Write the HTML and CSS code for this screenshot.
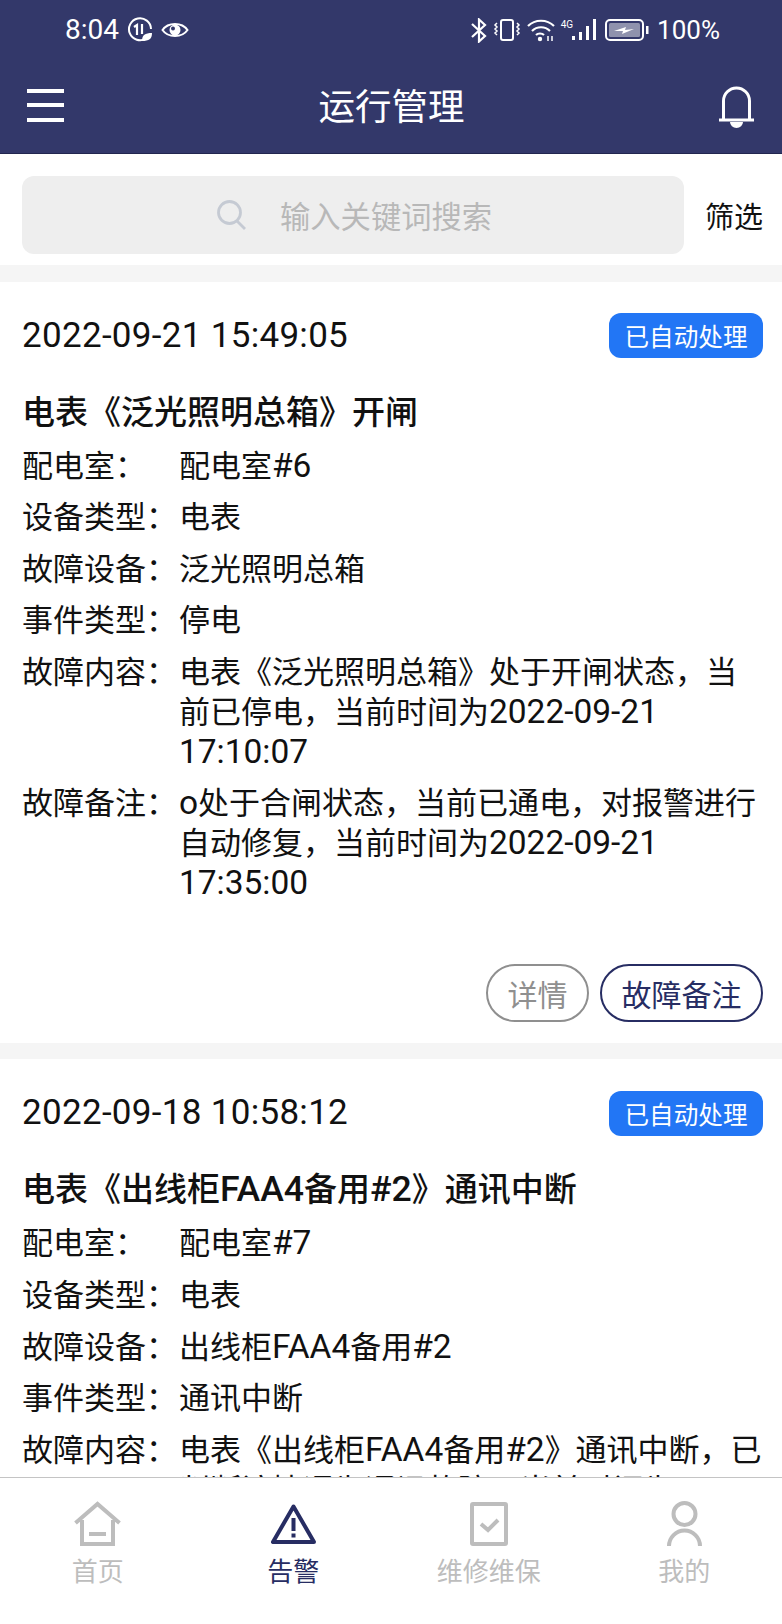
FILE: index.html
```html
<!DOCTYPE html>
<html lang="zh-CN">
<head>
    <meta charset="UTF-8">
    <meta name="viewport" content="width=device-width, initial-scale=1.0">
    <title>运行管理</title>
    <link rel="stylesheet" href="styles.css">
</head>
<body>
    <div class="app">
        <header class="header">
            <div class="status-bar">
                <div class="status-left">
                    <span class="time">8:04</span>
                    <svg width="26" height="26" viewBox="0 0 26 26" fill="none" stroke="#fff" stroke-width="2">
                        <path d="M19 21.500A11 11 0 1 1 24 12"/>
                        <path d="M7 10l3-2v10M15 7v10" stroke-width="2.200"/>
                        <path d="M15 24c0-6 3-8 10-8 0 6-3 8-10 8z" fill="#fff" stroke="none"/>
                    </svg>
                    <svg width="28" height="16" viewBox="0 0 28 16" fill="none" stroke="#fff" stroke-width="2">
                        <path d="M1.500 8C7 0 21 0 26.500 8C21 16 7 16 1.500 8z"/>
                        <circle cx="14" cy="8" r="5.500" fill="#fff" stroke="none"/>
                        <circle cx="12" cy="6.500" r="2" fill="#33386a" stroke="none"/>
                    </svg>
                </div>
                <div class="status-right">
                    <svg width="17" height="25" viewBox="0 0 17 25" fill="none" stroke="#fff" stroke-width="2.200">
                        <path d="M2 6l13 12-6 5.500V1.500L15 7 2 19"/>
                    </svg>
                    <svg width="28" height="24" viewBox="0 0 28 24" fill="none" stroke="#fff" stroke-width="2">
                        <rect x="8" y="2" width="12" height="20" rx="2"/>
                        <path d="M4 5l-2 2 2 2-2 2 2 2-2 2 2 2M24 5l2 2-2 2 2 2-2 2 2 2-2 2" stroke-width="1.500"/>
                    </svg>
                    <svg width="28" height="24" viewBox="0 0 28 24" fill="none" stroke="#fff" stroke-width="2.200">
                        <path d="M1 8c7-7 19-7 26 0M5 13c5-5 13-5 18 0M9 17c2-2 6-2 8 0"/>
                        <circle cx="13" cy="21" r="2.200" fill="#fff" stroke="none"/>
                        <path d="M21 18v5M25 18v5" stroke-width="1.500"/>
                    </svg>
                    <div class="signal">
                        <span class="signal-label">4G</span>
                        <svg width="26" height="22" viewBox="0 0 26 22" fill="#fff">
                            <rect x="1" y="17" width="3" height="4"/>
                            <rect x="8" y="13" width="3" height="8"/>
                            <rect x="15" y="7" width="3" height="14"/>
                            <rect x="22" y="0" width="3" height="21"/>
                        </svg>
                    </div>
                    <svg class="battery-icon" width="44" height="24" viewBox="0 0 44 24" fill="none">
                        <rect x="1" y="2" width="37" height="20" rx="4" stroke="#fff" stroke-width="2"/>
                        <rect x="4" y="5" width="31" height="14" rx="1.500" fill="#8f92ad"/>
                        <path d="M9 13l12-4-1 3 9-1-12 5 1-3z" fill="#fff"/>
                        <rect x="41" y="8" width="2.500" height="8" fill="#fff"/>
                    </svg>
                    <span class="battery">100%</span>
                </div>
            </div>
            <div class="toolbar">
                <svg width="37" height="33" viewBox="0 0 37 33" fill="#fff">
                    <rect x="0" y="0" width="37" height="4"/>
                    <rect x="0" y="14" width="37" height="4"/>
                    <rect x="0" y="29" width="37" height="4"/>
                </svg>
                <h1 class="page-title">运行管理</h1>
                <svg class="bell" width="35" height="42" viewBox="0 0 35 42" fill="none" stroke="#fff" stroke-width="3">
                    <path d="M4.500 33V15a13 13 0 0 1 26 0v18"/>
                    <path d="M0 34h35"/>
                    <path d="M11 36h13a6.500 6 0 0 1-13 0z" fill="#fff" stroke="none"/>
                </svg>
            </div>
        </header>

        <main class="content">
            <div class="search-row">
                <div class="search-box">
                    <svg width="30" height="30" viewBox="0 0 30 30" fill="none" stroke="#c5cad3" stroke-width="2.800">
                        <circle cx="12.500" cy="12.500" r="11"/>
                        <path d="M20 21l8 8"/>
                    </svg>
                    <span class="search-text">输入关键词搜索</span>
                </div>
                <span class="filter">筛选</span>
            </div>

            <section class="card">
                <div class="card-top">
                    <span class="card-date">2022-09-21 15:49:05</span>
                    <span class="badge">已自动处理</span>
                </div>
                <h2 class="card-title">电表《泛光照明总箱》开闸</h2>
                <dl class="info">
                    <dt>配电室&#65306;</dt><dd>配电室<span class="num">#6</span></dd>
                    <dt>设备类型&#65306;</dt><dd>电表</dd>
                    <dt>故障设备&#65306;</dt><dd>泛光照明总箱</dd>
                    <dt>事件类型&#65306;</dt><dd>停电</dd>
                    <dt>故障内容&#65306;</dt><dd>电表《泛光照明总箱》处于开闸状态&#65292;当前已停电&#65292;当前时间为<span class="num">2022-09-21</span> <span class="num">17:10:07</span></dd>
                    <dt>故障备注&#65306;</dt><dd><span class="num">o</span>处于合闸状态&#65292;当前已通电&#65292;对报警进行自动修复&#65292;当前时间为<span class="num">2022-09-21</span> <span class="num">17:35:00</span></dd>
                </dl>
                <div class="card-actions">
                    <span class="btn btn-grey">详情</span>
                    <span class="btn btn-navy">故障备注</span>
                </div>
            </section>

            <section class="card">
                <div class="card-top">
                    <span class="card-date">2022-09-18 10:58:12</span>
                    <span class="badge">已自动处理</span>
                </div>
                <h2 class="card-title">电表《出线柜<span class="num">FAA4</span>备用<span class="num">#2</span>》通讯中断</h2>
                <dl class="info">
                    <dt>配电室&#65306;</dt><dd>配电室<span class="num">#7</span></dd>
                    <dt>设备类型&#65306;</dt><dd>电表</dd>
                    <dt>故障设备&#65306;</dt><dd>出线柜<span class="num">FAA4</span>备用<span class="num">#2</span></dd>
                    <dt>事件类型&#65306;</dt><dd>通讯中断</dd>
                    <dt>故障内容&#65306;</dt><dd>电表《出线柜<span class="num">FAA4</span>备用<span class="num">#2</span>》通讯中断&#65292;已判断该情况为通讯故障&#65292;当前时间为<span class="num">2022-09-18</span></dd>
                </dl>
            </section>
        </main>

        <nav class="tabbar">
            <div class="tab">
                <svg width="47" height="46" viewBox="0 0 47 46" fill="none" stroke="#bdbdbd" stroke-width="4">
                    <path d="M1.500 22L23.500 3l22 19"/>
                    <path d="M8 19v24h31V19"/>
                    <path d="M15 33h17"/>
                </svg>
                <span>首页</span>
            </div>
            <div class="tab tab-active">
                <svg width="45" height="46" viewBox="0 0 45 46" fill="none">
                    <path d="M22.500 5.500L2 41h41z" stroke="#272d63" stroke-width="4" stroke-linejoin="round"/>
                    <rect x="20.500" y="17" width="4" height="13" fill="#272d63"/>
                    <rect x="20.500" y="32.500" width="4" height="4" fill="#272d63"/>
                </svg>
                <span>告警</span>
            </div>
            <div class="tab">
                <svg width="38" height="46" viewBox="0 0 38 46" fill="none" stroke="#bdbdbd" stroke-width="4">
                    <rect x="2" y="3" width="34" height="40" rx="1"/>
                    <path d="M11 23l7 6 10-10"/>
                </svg>
                <span>维修维保</span>
            </div>
            <div class="tab">
                <svg width="35" height="46" viewBox="0 0 35 46" fill="none" stroke="#bdbdbd" stroke-width="4">
                    <circle cx="17.500" cy="13" r="11"/>
                    <path d="M2 45a15.500 15.500 0 0 1 31 0"/>
                </svg>
                <span>我的</span>
            </div>
        </nav>
    </div>
</body>
</html>
```

FILE: styles.css
```css
* {
    box-sizing: border-box;
}

body {
    margin: 0;
    font-family: "Noto Sans CJK SC", "Noto Sans", sans-serif;
    color: #111;
    background: #fff;
}

.app {
    height: 1624px;
    display: flex;
    flex-direction: column;
    overflow: hidden;
}

.header {
    flex: none;
    height: 154px;
    background: #33386a;
    border-bottom: 1px solid #22264f;
    color: #fff;
}

.status-bar {
    height: 60px;
    padding: 0 62px 0 65px;
    display: flex;
    justify-content: space-between;
    align-items: center;
}

.status-left,
.status-right {
    display: flex;
    align-items: center;
}

.status-left {
    gap: 8px;
}

.status-right {
    gap: 6px;
}

.time,
.battery {
    font-family: "Roboto", sans-serif;
    font-size: 28px;
    line-height: 32px;
}

.battery {
    font-size: 26px;
}

.battery-icon {
    margin: 0 2px;
}

.signal {
    display: flex;
    align-items: flex-end;
}

.signal-label {
    font-family: "Roboto", sans-serif;
    font-size: 10px;
    line-height: 12px;
    align-self: flex-start;
    margin-right: -2px;
}

.toolbar {
    height: 93px;
    padding: 0 28px 3px 27px;
    display: flex;
    justify-content: space-between;
    align-items: center;
}

.page-title {
    margin: 0;
    font-size: 36.500px;
    line-height: 48px;
    font-weight: 400;
}

.bell {
    margin-top: 4px;
}

.content {
    flex: 1;
    min-height: 0;
    overflow: hidden;
    background: #f5f5f5;
}

.search-row {
    height: 111px;
    padding: 22px 19px 0 22px;
    display: flex;
    justify-content: space-between;
    background: #fff;
}

.search-box {
    width: 662px;
    height: 78px;
    padding-left: 195px;
    display: flex;
    align-items: center;
    gap: 33px;
    background: #eeeeee;
    border-radius: 12px;
}

.search-text {
    font-size: 30.300px;
    color: #b8b8b8;
}

.filter {
    font-size: 29px;
    line-height: 78px;
    color: #111;
}

.card {
    margin-top: 16.500px;
    padding: 31px 19px 20.500px 22px;
    background: #fff;
}

.card-top {
    display: flex;
    justify-content: space-between;
    align-items: center;
    height: 46px;
}

.card-date {
    font-family: "Roboto", sans-serif;
    font-size: 35px;
    line-height: 46px;
    letter-spacing: 0.300px;
}

.badge {
    width: 154px;
    height: 45px;
    border-radius: 12px;
    background: #2276f5;
    color: #fff;
    font-size: 24.600px;
    line-height: 44px;
    text-align: center;
}

.card-title {
    margin: 29px 0 0;
    font-size: 33px;
    line-height: 44px;
    font-weight: 500;
}

.info {
    margin: 12px 0 0;
    display: grid;
    grid-template-columns: 157px 1fr;
    row-gap: 11.600px;
    font-size: 31px;
    line-height: 40px;
}

.info dt,
.info dd {
    margin: 0;
}

.num {
    font-family: "Roboto", sans-serif;
    font-size: 1.08em;
    line-height: 1;
    white-space: nowrap;
}

.card-actions {
    margin-top: 62.500px;
    display: flex;
    justify-content: flex-end;
    gap: 11px;
}

.btn {
    height: 58.500px;
    border-radius: 30px;
    border: 2px solid;
    font-size: 30px;
    line-height: 54px;
    text-align: center;
    background: #fff;
}

.btn-grey {
    width: 103px;
    color: #8f8f8f;
    border-color: #8f8f8f;
}

.btn-navy {
    width: 163px;
    color: #272d63;
    border-color: #272d63;
}

.tabbar {
    flex: none;
    height: 147px;
    padding-top: 23px;
    border-top: 1px solid #c4c4c4;
    background: #fff;
    display: grid;
    grid-template-columns: repeat(4, 1fr);
}

.tab {
    display: flex;
    flex-direction: column;
    align-items: center;
    color: #bdbdbd;
    font-size: 26px;
}

.tab span {
    margin-top: 5px;
    line-height: 36px;
}

.tab-active {
    color: #272d63;
}
```
